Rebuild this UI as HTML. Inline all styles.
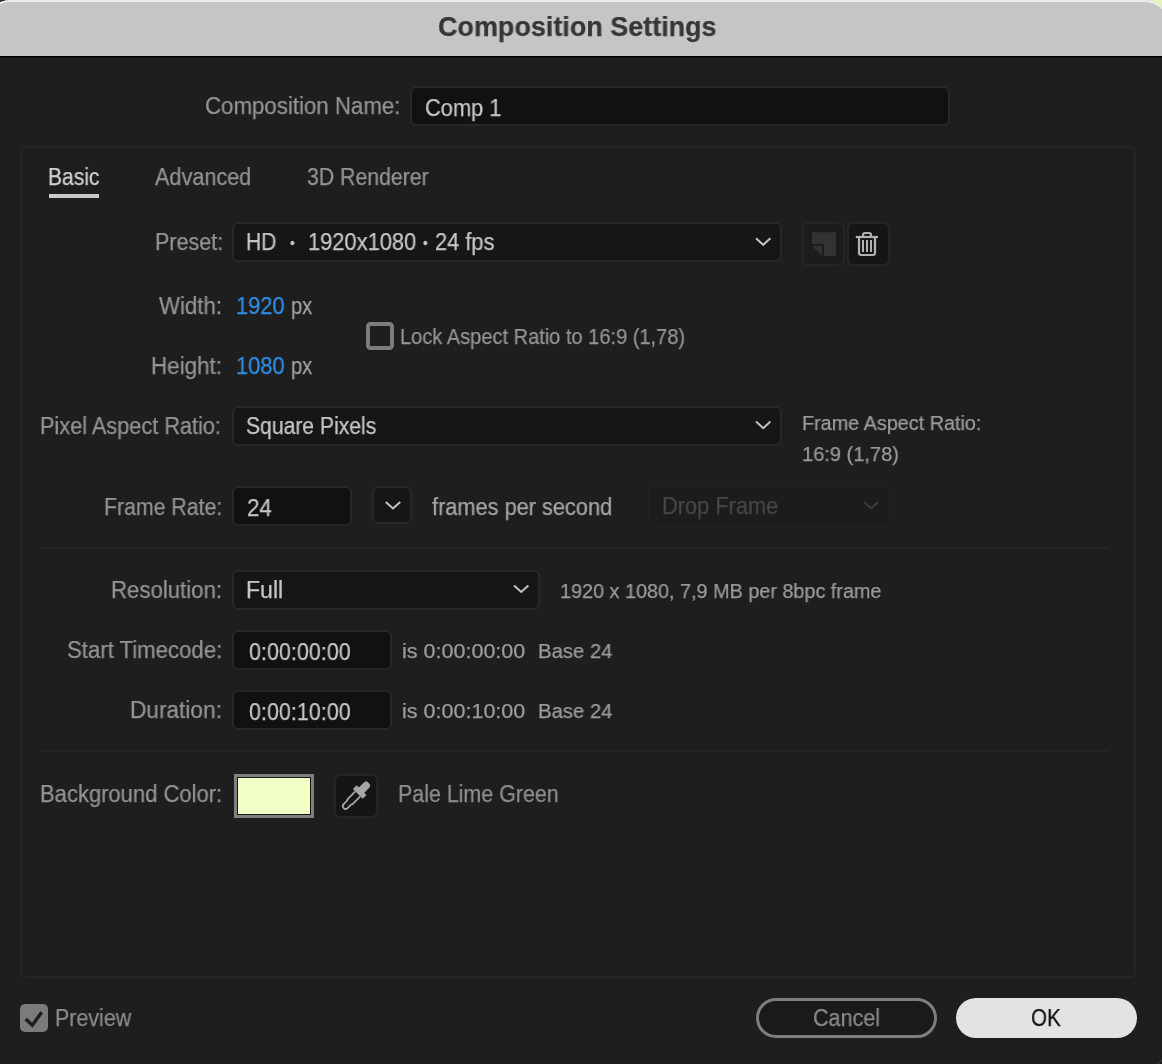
<!DOCTYPE html>
<html><head><meta charset="utf-8"><title>Composition Settings</title>
<style>
*{box-sizing:border-box;margin:0;padding:0}
html,body{width:1162px;height:1064px;overflow:hidden;background:#1e1e1e}
body{font-family:"Liberation Sans",sans-serif;font-size:22px;color:#9a9a9a;position:relative}
.t{position:absolute;white-space:nowrap;transform-origin:0 50%;display:block;will-change:transform;-webkit-text-stroke:0.25px currentColor}
.a{position:absolute}
#cornerL{left:0;top:0;width:20px;height:20px;background:#2b2b2b}
#cornerR{right:0;top:0;width:24px;height:20px;background:#e6f3bd}
#titlebar{left:-13px;top:0;width:1181px;height:80px;background:#c5c5c5;border-radius:23px;box-shadow:inset 0 2px 0 #ececec}
#bodybg{left:0;top:56px;width:1162px;height:1008px;background:linear-gradient(#000 0,#000 1px,#0f0f0f 1px,#0f0f0f 2px,#1e1e1e 2px)}
.box{position:absolute;background:#161616;border:2px solid #272727;border-radius:6px}
.in{background:#111}
.btn{position:absolute;background:#151515;border:2px solid #252525;border-radius:6px}
.sep{position:absolute;left:40px;width:1069px;height:2px;background:#242424}
#panel{left:20px;top:146px;width:1116px;height:832px;border:2px solid #252525;border-radius:6px}
svg{position:absolute;left:0;top:0;overflow:visible}
</style></head><body>
<div class="a" id="cornerL"></div><div class="a" id="cornerR"></div>
<div class="a" id="titlebar"></div>
<div class="a" id="bodybg"></div>

<div class="a" id="panel"></div>
<div class="a" style="left:49px;top:194px;width:50px;height:4px;background:#c9c9c9"></div>

<!-- fields -->
<div class="box in" style="left:410px;top:86px;width:540px;height:40px"></div>
<div class="box" style="left:232px;top:222px;width:550px;height:40px"></div>
<div class="box" style="left:232px;top:406px;width:550px;height:40px"></div>
<div class="box in" style="left:232px;top:486px;width:120px;height:40px"></div>
<div class="box" style="left:372px;top:486px;width:40px;height:38px"></div>
<div class="box" style="left:648px;top:486px;width:242px;height:40px;background:#1c1c1c;border-color:#202020"></div>
<div class="box" style="left:232px;top:570px;width:308px;height:40px"></div>
<div class="box in" style="left:232px;top:630px;width:160px;height:40px"></div>
<div class="box in" style="left:232px;top:690px;width:160px;height:40px"></div>

<div class="btn" style="left:802px;top:222px;width:43px;height:44px;background:#1c1c1c"></div>
<div class="btn" style="left:847px;top:222px;width:43px;height:44px"></div>
<div class="btn" style="left:334px;top:774px;width:44px;height:44px"></div>

<div class="sep" style="top:547px"></div>
<div class="sep" style="top:750px"></div>

<!-- lock checkbox -->
<div class="a" style="left:366px;top:322px;width:28px;height:28px;border:4px solid #7c7c7c;border-radius:4.5px"></div>
<!-- swatch -->
<div class="a" style="left:234px;top:774px;width:80px;height:44px;background:#808080"></div>
<div class="a" style="left:237px;top:777px;width:74px;height:38px;background:#151515"></div>
<div class="a" style="left:238px;top:778px;width:72px;height:36px;background:#f0ffc6"></div>
<!-- preview checkbox -->
<div class="a" style="left:20px;top:1004px;width:28px;height:28px;background:#7b7b7b;border-radius:5px"></div>
<!-- buttons -->
<div class="a" style="left:756px;top:998px;width:180.5px;height:40px;border:3px solid #7e7e7e;border-radius:20px;background:#1a1a1a"></div>
<div class="a" style="left:956px;top:998px;width:180.5px;height:40px;border-radius:20px;background:#e3e3e3"></div>

<svg width="1162" height="1064" viewBox="0 0 1162 1064" fill="none">
<!-- chevrons -->
<g stroke="#c2c2c2" stroke-width="2" stroke-linecap="butt" stroke-linejoin="miter">
<path d="M756 238.2 L763.2 244.8 L770.4 238.2"/>
<path d="M756 421.6 L763.2 428.2 L770.4 421.6"/>
<path d="M385.8 501.9 L393 508.5 L400.2 501.9"/>
<path d="M514 585.4 L521.2 592 L528.4 585.4"/>
</g>
<path d="M864.5 502.5 L871 508.3 L877.5 502.5" stroke="#3e3e3e" stroke-width="2" stroke-linecap="round" stroke-linejoin="round"/>
<!-- bullets -->

<!-- new preset icon -->
<path d="M812 232.2 H836 V256 H823.8 V243.8 H812 Z" fill="#333"/>
<path d="M812 246.1 H822 V256 Z" fill="#333"/>
<!-- trash icon -->
<g stroke="#b2b2b2" stroke-width="2.2" fill="none">
<path d="M855.8 237 H878"/>
<path d="M863 236 V235 Q863 233 865 233 H869 Q871 233 871 235 V236" />
<path d="M859 238 V253 Q859 255 861 255 H873 Q875 255 875 253 V238"/>
<path d="M863 240 V252 M867 240 V252 M871 240 V252" stroke-width="2"/>
</g>
<!-- eyedropper -->
<g transform="translate(359.7 792) rotate(45)">
<path d="M-3.85 0 V-9 A3.85 3.85 0 0 1 3.85 -9 V0 Z" fill="#a6a6a6"/>
<rect x="-6.9" y="-2.7" width="13.8" height="5.4" fill="#a6a6a6"/>
<path d="M-3.5 2.7 V12.5 Q-3.5 14 -2.8 15.2 L-2.7 20 A2.7 2.7 0 0 0 2.7 20 L2.8 15.2 Q3.5 14 3.5 12.5 V2.7" stroke="#a6a6a6" stroke-width="1.8" fill="none"/>
</g>
<!-- window corner -->
<path d="M1168.5 1044.5 A22.5 22.5 0 0 1 1146 1067 L1172 1072 Z" fill="#171717"/>
<path d="M1168.5 1044.5 A22.5 22.5 0 0 1 1146 1067" stroke="#323232" stroke-width="1.6"/>
<!-- preview check -->
<path d="M25.7 1019 L32.3 1025.2 L41.7 1012.2" stroke="#1e1e1e" stroke-width="3.4" fill="none"/>
</svg>

<span class="t" style="left:437.72px;top:10.37px;font-size:27.5px;line-height:33px;color:#363636;transform:scaleX(0.9803);font-weight:bold">Composition Settings</span>
<span class="t" style="left:204.83px;top:91.98px;font-size:23px;line-height:28px;color:#949494;transform:scaleX(0.9675)">Composition Name:</span>
<span class="t" style="left:425.05px;top:94.08px;font-size:23px;line-height:28px;color:#c6c6c6;transform:scaleX(0.9487)">Comp 1</span>
<span class="t" style="left:48.29px;top:162.88px;font-size:23px;line-height:28px;color:#d0d0d0;transform:scaleX(0.9134)">Basic</span>
<span class="t" style="left:155.00px;top:162.88px;font-size:23px;line-height:28px;color:#949494;transform:scaleX(0.9408)">Advanced</span>
<span class="t" style="left:307.00px;top:162.58px;font-size:23px;line-height:28px;color:#949494;transform:scaleX(0.9241)">3D Renderer</span>
<span class="t" style="left:154.56px;top:228.38px;font-size:23px;line-height:28px;color:#949494;transform:scaleX(0.9365)">Preset:</span>
<span class="t" style="left:246.08px;top:228.38px;font-size:23px;line-height:28px;color:#c6c6c6;transform:scaleX(0.9174)">HD</span>
<span class="t" style="left:290.10px;top:235.25px;font-size:14px;line-height:17px;color:#c6c6c6;transform:scaleX(0.9600)">•</span>
<span class="t" style="left:308.05px;top:228.38px;font-size:23px;line-height:28px;color:#c6c6c6;transform:scaleX(0.9505)">1920x1080</span>
<span class="t" style="left:423.10px;top:235.25px;font-size:14px;line-height:17px;color:#c6c6c6;transform:scaleX(0.9600)">•</span>
<span class="t" style="left:435.05px;top:228.38px;font-size:23px;line-height:28px;color:#c6c6c6;transform:scaleX(0.9484)">24 fps</span>
<span class="t" style="left:158.70px;top:292.08px;font-size:23px;line-height:28px;color:#949494;transform:scaleX(0.9672)">Width:</span>
<span class="t" style="left:236.35px;top:292.08px;font-size:23px;line-height:28px;color:#2f8eea;transform:scaleX(0.9519)">1920</span>
<span class="t" style="left:291.33px;top:292.08px;font-size:23px;line-height:28px;color:#a2a2a2;transform:scaleX(0.8743)">px</span>
<span class="t" style="left:150.73px;top:351.98px;font-size:23px;line-height:28px;color:#949494;transform:scaleX(0.9747)">Height:</span>
<span class="t" style="left:236.35px;top:351.98px;font-size:23px;line-height:28px;color:#2f8eea;transform:scaleX(0.9519)">1080</span>
<span class="t" style="left:291.33px;top:351.98px;font-size:23px;line-height:28px;color:#a2a2a2;transform:scaleX(0.8743)">px</span>
<span class="t" style="left:400.06px;top:323.72px;font-size:21.3px;line-height:26px;color:#949494;transform:scaleX(0.9406)">Lock Aspect Ratio to 16:9 (1,78)</span>
<span class="t" style="left:40.16px;top:412.28px;font-size:23px;line-height:28px;color:#949494;transform:scaleX(0.9437)">Pixel Aspect Ratio:</span>
<span class="t" style="left:245.68px;top:412.28px;font-size:23px;line-height:28px;color:#c6c6c6;transform:scaleX(0.9180)">Square Pixels</span>
<span class="t" style="left:801.93px;top:410.40px;font-size:20.5px;line-height:25px;color:#9c9c9c;transform:scaleX(0.9661)">Frame Aspect Ratio:</span>
<span class="t" style="left:801.92px;top:440.80px;font-size:20.5px;line-height:25px;color:#9c9c9c;transform:scaleX(0.9772)">16:9 (1,78)</span>
<span class="t" style="left:104.08px;top:492.58px;font-size:23px;line-height:28px;color:#949494;transform:scaleX(0.9249)">Frame Rate:</span>
<span class="t" style="left:247.13px;top:494.38px;font-size:23px;line-height:28px;color:#c6c6c6;transform:scaleX(0.9721)">24</span>
<span class="t" style="left:431.60px;top:492.68px;font-size:23px;line-height:28px;color:#a6a6a6;transform:scaleX(0.9458)">frames per second</span>
<span class="t" style="left:662.05px;top:492.38px;font-size:23px;line-height:28px;color:#474747;transform:scaleX(0.9471)">Drop Frame</span>
<span class="t" style="left:111.04px;top:575.88px;font-size:23px;line-height:28px;color:#949494;transform:scaleX(0.9647)">Resolution:</span>
<span class="t" style="left:245.70px;top:575.88px;font-size:23px;line-height:28px;color:#c6c6c6;transform:scaleX(1.0043)">Full</span>
<span class="t" style="left:560.33px;top:578.30px;font-size:20.5px;line-height:25px;color:#9c9c9c;transform:scaleX(0.9660)">1920 x 1080, 7,9 MB per 8bpc frame</span>
<span class="t" style="left:66.54px;top:635.98px;font-size:23px;line-height:28px;color:#949494;transform:scaleX(0.9636)">Start Timecode:</span>
<span class="t" style="left:248.80px;top:638.18px;font-size:23px;line-height:28px;color:#c6c6c6;transform:scaleX(0.9350)">0:00:00:00</span>
<span class="t" style="left:401.95px;top:637.80px;font-size:20.5px;line-height:25px;color:#9c9c9c;transform:scaleX(1.0501)">is 0:00:00:00</span>
<span class="t" style="left:538.01px;top:637.80px;font-size:20.5px;line-height:25px;color:#9c9c9c;transform:scaleX(0.9902)">Base 24</span>
<span class="t" style="left:130.32px;top:696.28px;font-size:23px;line-height:28px;color:#949494;transform:scaleX(0.9842)">Duration:</span>
<span class="t" style="left:248.80px;top:697.98px;font-size:23px;line-height:28px;color:#c6c6c6;transform:scaleX(0.9350)">0:00:10:00</span>
<span class="t" style="left:401.95px;top:697.70px;font-size:20.5px;line-height:25px;color:#9c9c9c;transform:scaleX(1.0501)">is 0:00:10:00</span>
<span class="t" style="left:538.01px;top:697.70px;font-size:20.5px;line-height:25px;color:#9c9c9c;transform:scaleX(0.9902)">Base 24</span>
<span class="t" style="left:40.24px;top:780.08px;font-size:23px;line-height:28px;color:#949494;transform:scaleX(0.9559)">Background Color:</span>
<span class="t" style="left:398.37px;top:780.18px;font-size:23px;line-height:28px;color:#8f8f8f;transform:scaleX(0.9309)">Pale Lime Green</span>
<span class="t" style="left:54.57px;top:1004.38px;font-size:23px;line-height:28px;color:#8c8c8c;transform:scaleX(0.9311)">Preview</span>
<span class="t" style="left:812.76px;top:1004.48px;font-size:23px;line-height:28px;color:#8a8a8a;transform:scaleX(0.9355)">Cancel</span>
<span class="t" style="left:1030.71px;top:1004.38px;font-size:23px;line-height:28px;color:#101010;transform:scaleX(0.8939)">OK</span>
</body></html>
